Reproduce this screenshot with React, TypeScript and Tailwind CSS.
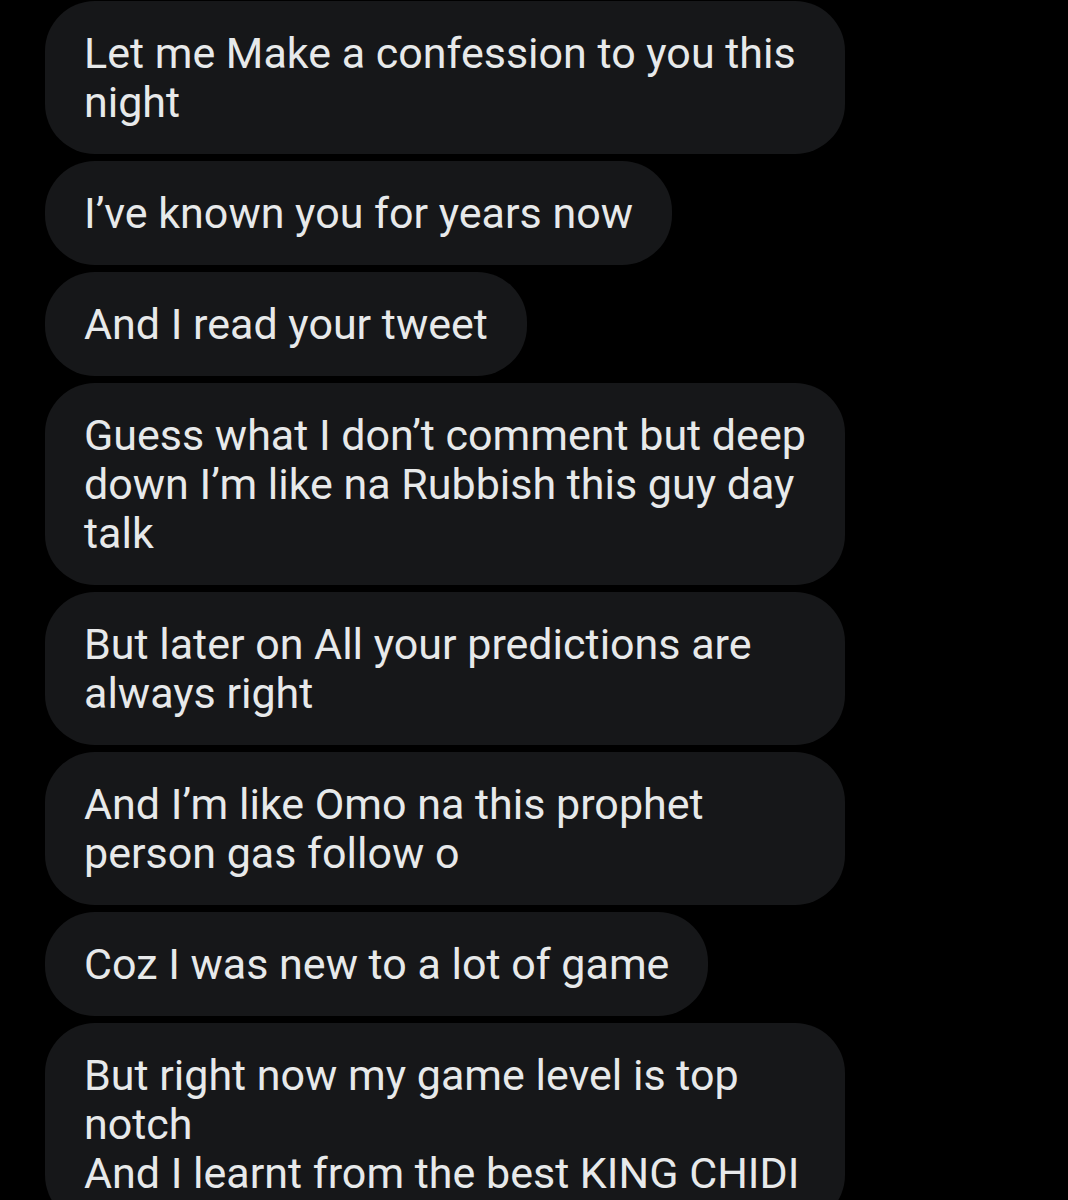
const messages = [
  'Let me Make a confession to you this night',
  'I\u2019ve known you for years now',
  'And I read your tweet',
  'Guess what I don\u2019t comment but deep down I\u2019m like na Rubbish this guy day talk',
  'But later on All your predictions are always right',
  'And I\u2019m like Omo na this prophet person gas follow o',
  'Coz I was new to a lot of game',
  'But right now my game level is top notch\nAnd I learnt from the best KING CHIDI',
];

export default function App() {
  return (
    <div className="h-[1200px] w-[1068px] overflow-hidden bg-black">
      <div className="flex flex-col items-start gap-[7px] pl-[45px] pt-[1px]" style={{ fontFamily: 'Roboto, "Noto Sans", sans-serif' }}>
        {messages.map((m, i) => (
          <div
            key={i}
            className="max-w-[800px] whitespace-pre-line rounded-[50px] bg-[#161719] px-[39px] py-[27.5px] text-[43px] leading-[49px] text-[#e7e9ea]"
          >
            {m}
          </div>
        ))}
      </div>
    </div>
  );
}
